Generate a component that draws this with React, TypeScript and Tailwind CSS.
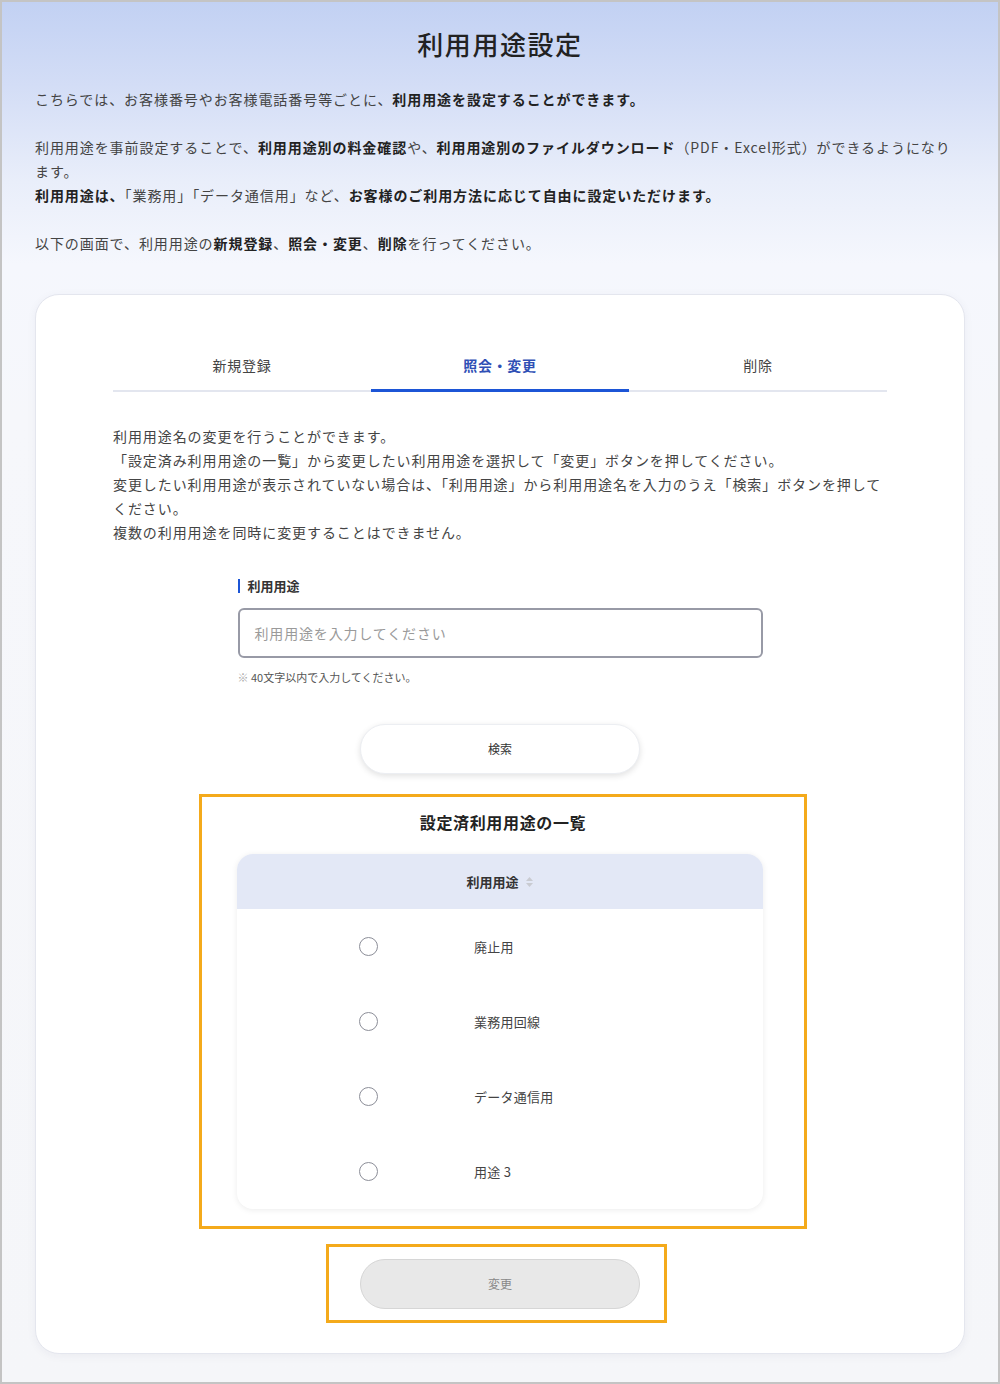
import React from "react";

const font = { fontFamily: '"Noto Sans CJK JP", "Noto Sans", sans-serif' };

function SortIcon() {
  return (
    <svg width="9" height="12" viewBox="0 0 9 12" className="ml-[6px]">
      <path d="M4.5 1 L8 5 L1 5 Z" fill="#c9cbd1" />
      <path d="M4.5 11 L8 7 L1 7 Z" fill="#c9cbd1" />
    </svg>
  );
}

function Row({ label }: { label: string }) {
  return (
    <div className="flex h-[75px] items-center pl-[122px]">
      <span className="block h-[19px] w-[19px] rounded-full border-[1.5px] border-[#8c8e98] bg-white" />
      <span className="ml-[96px] text-[13px] tracking-[0.02em] text-[#444]">{label}</span>
    </div>
  );
}

export default function App() {
  return (
    <div
      style={font}
      className="box-border h-[1384px] w-[1000px] overflow-hidden border-2 border-[#c4c4c4] bg-[linear-gradient(180deg,#c2d1f3_0%,#d3ddf6_6%,#e9eefa_13%,#f5f7fd_19%,#f6f7fb_30%,#f5f6f9_100%)] px-[33px] pt-[24px] text-[#444]"
    >
      <h1 className="text-center text-[26px] font-medium leading-[36px] tracking-[0.06em] text-[#222]">
        利用用途設定
      </h1>

      <div className="mt-[25px] text-[14px] leading-[24px] tracking-[0.066em] text-[#444]">
        <p>
          こちらでは、お客様番号やお客様電話番号等ごとに、
          <b className="font-bold text-[#222]">利用用途を設定することができます。</b>
        </p>
        <p className="mt-[24px]">
          利用用途を事前設定することで、
          <b className="font-bold text-[#222]">利用用途別の料金確認</b>や、
          <b className="font-bold text-[#222]">利用用途別のファイルダウンロード</b>
          （PDF・Excel形式）ができるようになります。
        </p>
        <p>
          <b className="font-bold text-[#222]">利用用途は、</b>「業務用」「データ通信用」など、
          <b className="font-bold text-[#222]">お客様のご利用方法に応じて自由に設定いただけます。</b>
        </p>
        <p className="mt-[24px]">
          以下の画面で、利用用途の<b className="font-bold text-[#222]">新規登録</b>、
          <b className="font-bold text-[#222]">照会・変更</b>、
          <b className="font-bold text-[#222]">削除</b>を行ってください。
        </p>
      </div>

      <div className="mt-[39px] rounded-[24px] border border-[#e4e6ee] bg-white px-[77px] pb-[30px] pt-[58px] shadow-[0_2px_10px_rgba(30,40,80,0.05)]">
        <div className="flex border-b-2 border-[#e3e6ef]">
          <div className="flex-1 pb-[13px] text-center text-[14px] leading-[24px] tracking-[0.05em] text-[#444]">
            新規登録
          </div>
          <div className="relative flex-1 pb-[13px] text-center text-[14px] font-bold leading-[24px] tracking-[0.05em] text-[#2f4fb5]">
            照会・変更
            <span className="absolute bottom-[-2px] left-0 right-0 h-[3px] bg-[#1c55d6]" />
          </div>
          <div className="flex-1 pb-[13px] text-center text-[14px] leading-[24px] tracking-[0.05em] text-[#444]">
            削除
          </div>
        </div>

        <div className="mt-[32px] text-[14px] leading-[24px] tracking-[0.066em] text-[#444]">
          <p>利用用途名の変更を行うことができます。</p>
          <p>「設定済み利用用途の一覧」から変更したい利用用途を選択して「変更」ボタンを押してください。</p>
          <p>
            変更したい利用用途が表示されていない場合は、「利用用途」から利用用途名を入力のうえ「検索」ボタンを押してください。
          </p>
          <p>複数の利用用途を同時に変更することはできません。</p>
        </div>

        <div className="mx-auto mt-[32px] w-[525px]">
          <div className="flex items-center">
            <span className="h-[14px] w-[2px] bg-[#1c55d6]" />
            <span className="ml-[8px] text-[13px] font-bold leading-[20px] text-[#333]">利用用途</span>
          </div>
          <div className="mt-[12px] flex h-[50px] items-center rounded-[6px] border-2 border-[#989aa6] pl-[15px] text-[14px] tracking-[0.06em] text-[#9a9a9a]">
            利用用途を入力してください
          </div>
          <p className="mt-[12px] text-[11px] leading-[14px] text-[#555]">
            <span className="text-[#aaa]">※</span> 40文字以内で入力してください。
          </p>
        </div>

        <div className="mt-[40px] flex justify-center">
          <div className="flex h-[50px] w-[280px] items-center justify-center rounded-full border border-[#eceef2] bg-white text-[12px] text-[#333] shadow-[0_2px_6px_rgba(0,0,0,0.12)]">
            検索
          </div>
        </div>

        <div className="ml-[86px] mt-[20px] w-[608px] border-[3px] border-[#f4aa1b] pb-[17px] pt-[14px]">
          <h2 className="text-center text-[16px] font-bold leading-[22px] tracking-[0.04em] text-[#222]">
            設定済利用用途の一覧
          </h2>
          <div className="ml-[35px] mt-[21px] w-[526px] overflow-hidden rounded-[16px] bg-white shadow-[0_1px_6px_rgba(0,0,0,0.08)]">
            <div className="flex h-[55px] items-center justify-center bg-[#e3e8f6] text-[13px] font-bold text-[#333]">
              利用用途
              <SortIcon />
            </div>
            <Row label="廃止用" />
            <Row label="業務用回線" />
            <Row label="データ通信用" />
            <Row label="用途 3" />
          </div>
        </div>

        <div className="ml-[213px] mt-[15px] flex h-[79px] w-[341px] items-center border-[3px] border-[#f4aa1b] pl-[31px]">
          <div className="flex h-[50px] w-[280px] items-center justify-center rounded-full border border-[#d6d6d6] bg-[#e8e8e8] text-[12px] text-[#888]">
            変更
          </div>
        </div>
      </div>
    </div>
  );
}
